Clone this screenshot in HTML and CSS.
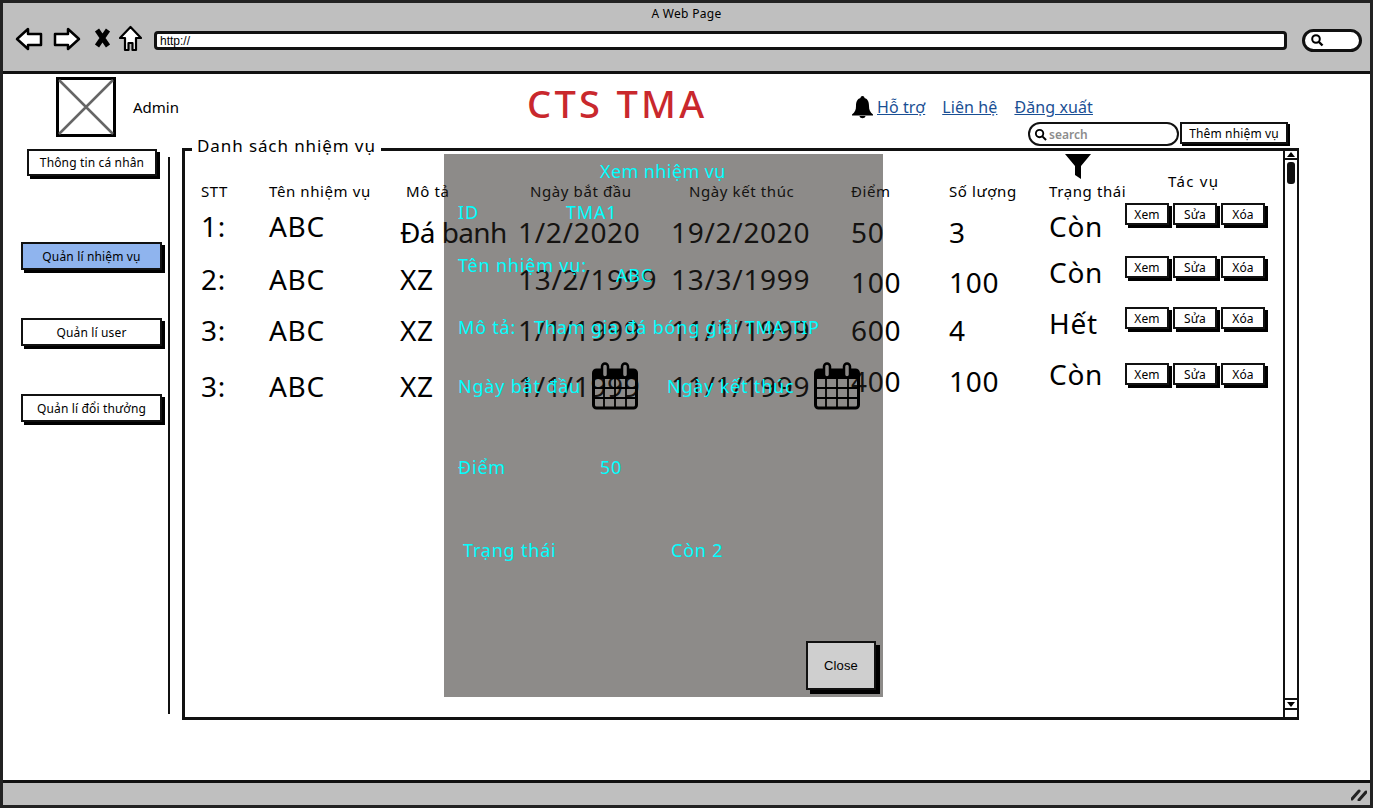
FILE: index.html
```html
<!DOCTYPE html>
<html>
<head>
    <meta charset="UTF-8">
    <meta name="viewport" content="width=device-width, initial-scale=1">
    <title>A Web Page</title>
    <link rel="stylesheet" href="styles.css">
</head>
<body>
<div class="window">
    <header class="topbar">
        <div class="window-title">A Web Page</div>
        <div class="toolbar">
            <svg class="nav-icon" width="28" height="24" viewBox="0 0 28 24"><path d="M2 12 L13 2 V7 H26 V18 H13 V22 Z" fill="#fff" stroke="#000" stroke-width="2.5" stroke-linejoin="round"/></svg>
            <svg class="nav-icon" width="28" height="24" viewBox="0 0 28 24"><path d="M26 12 L15 2 V7 H2 V18 H15 V22 Z" fill="#fff" stroke="#000" stroke-width="2.5" stroke-linejoin="round"/></svg>
            <svg class="nav-close" width="17" height="20" viewBox="0 0 17 20"><path d="M3 2 L14 18 M14 2 L3 18" stroke="#000" stroke-width="5"/></svg>
            <svg class="nav-home" width="23" height="27" viewBox="0 0 23 27"><path d="M11.5 2 L22 13 H17 V25 H13.5 V18 H9.5 V25 H6 V13 H1 Z" fill="#fff" stroke="#000" stroke-width="2.2" stroke-linejoin="round"/></svg>
            <div class="url-bar">http://</div>
            <div class="browser-search">
                <svg width="14" height="14" viewBox="0 0 14 14"><circle cx="6" cy="6" r="3.8" fill="none" stroke="#000" stroke-width="2"/><path d="M9 9 L12.5 12.5" stroke="#000" stroke-width="2.4"/></svg>
            </div>
        </div>
    </header>

    <div class="content">
        <div class="head">
            <svg class="avatar" width="60" height="60" viewBox="0 0 60 60"><rect x="1.5" y="1.5" width="57" height="57" fill="#fff" stroke="#000" stroke-width="3"/><path d="M3 3 L57 57 M57 3 L3 57" stroke="#666" stroke-width="2.5"/></svg>
            <div class="admin-name">Admin</div>
            <div class="brand">CTS TMA</div>
            <div class="head-right">
                <nav class="links">
                    <svg class="bell" width="23" height="24" viewBox="0 0 23 24"><path d="M11.5 1 C13 1 13.5 2 13.5 3 C17 4 18 7 18 11 C18 15 19 17 22 19.5 V20.5 H1 V19.5 C4 17 5 15 5 11 C5 7 6 4 9.5 3 C9.5 2 10 1 11.5 1 Z" fill="#000"/><path d="M8.5 21 C9 24 14 24 14.5 21 Z" fill="#000"/></svg>
                    <a href="#" class="link link-help">Hỗ trợ</a>
                    <a href="#" class="link link-contact">Liên hệ</a>
                    <a href="#" class="link">Đăng xuất</a>
                </nav>
                <div class="search-row">
                    <div class="search-box">
                        <svg width="13" height="13" viewBox="0 0 14 14"><circle cx="6" cy="6" r="4" fill="none" stroke="#000" stroke-width="2"/><path d="M9 9 L13 13" stroke="#000" stroke-width="2.2"/></svg>
                        <span>search</span>
                    </div>
                    <button class="btn btn-add">Thêm nhiệm vụ</button>
                </div>
            </div>
        </div>

        <div class="body">
            <aside class="sidebar">
                <div class="menu">
                    <button class="btn btn-profile">Thông tin cá nhân</button>
                    <button class="btn btn-menu btn-active">Quản lí nhiệm vụ</button>
                    <button class="btn btn-menu">Quản lí user</button>
                    <button class="btn btn-menu">Quản lí đổi thưởng</button>
                </div>
                <div class="divider"></div>
            </aside>

            <section class="panel">
                <div class="legend">Danh sách nhiệm vụ</div>
                <div class="task-table">
                    <svg class="filter" width="26" height="26" viewBox="0 0 26 26"><path d="M0 0 H26 L16 12 V25 L10 21 V12 Z" fill="#000"/></svg>

                    <div class="th">STT</div>
                    <div class="th">Tên nhiệm vụ</div>
                    <div class="th th-desc">Mô tả</div>
                    <div class="th th-start">Ngày bắt đầu</div>
                    <div class="th th-end">Ngày kết thúc</div>
                    <div class="th">Điểm</div>
                    <div class="th">Số lượng</div>
                    <div class="th">Trạng thái</div>
                    <div class="th th-actions">Tác vụ</div>

                    <div class="td">1:</div>
                    <div class="td">ABC</div>
                    <div class="td td-tight nudge-down">Đá banh</div>
                    <div class="td nudge-down">1/2/2020</div>
                    <div class="td nudge-down">19/2/2020</div>
                    <div class="td nudge-down">50</div>
                    <div class="td nudge-down">3</div>
                    <div class="td">Còn</div>
                    <div class="actions"><button class="btn btn-small">Xem</button><button class="btn btn-small">Sửa</button><button class="btn btn-small">Xóa</button></div>

                    <div class="td">2:</div>
                    <div class="td">ABC</div>
                    <div class="td">XZ</div>
                    <div class="td">13/2/1999</div>
                    <div class="td">13/3/1999</div>
                    <div class="td nudge-small">100</div>
                    <div class="td nudge-small">100</div>
                    <div class="td td-status">Còn</div>
                    <div class="actions"><button class="btn btn-small">Xem</button><button class="btn btn-small">Sửa</button><button class="btn btn-small">Xóa</button></div>

                    <div class="td">3:</div>
                    <div class="td">ABC</div>
                    <div class="td">XZ</div>
                    <div class="td">1/1/1999</div>
                    <div class="td">11/1/1999</div>
                    <div class="td">600</div>
                    <div class="td">4</div>
                    <div class="td td-status">Hết</div>
                    <div class="actions"><button class="btn btn-small">Xem</button><button class="btn btn-small">Sửa</button><button class="btn btn-small">Xóa</button></div>

                    <div class="td">3:</div>
                    <div class="td">ABC</div>
                    <div class="td">XZ</div>
                    <div class="td">1/1/1999</div>
                    <div class="td">11/1/1999</div>
                    <div class="td nudge-up">400</div>
                    <div class="td nudge-up">100</div>
                    <div class="td td-status-high">Còn</div>
                    <div class="actions"><button class="btn btn-small">Xem</button><button class="btn btn-small">Sửa</button><button class="btn btn-small">Xóa</button></div>
                </div>
                <div class="scrollbar">
                    <div class="scroll-arrow"><svg width="8" height="5" viewBox="0 0 8 5"><path d="M4 0 L8 5 H0 Z" fill="#000"/></svg></div>
                    <div class="scroll-thumb"></div>
                    <div class="scroll-arrow scroll-arrow-down"><svg width="8" height="5" viewBox="0 0 8 5"><path d="M0 0 H8 L4 5 Z" fill="#000"/></svg></div>
                </div>
            </section>
        </div>
    </div>

    <footer class="statusbar">
        <svg width="16" height="14" viewBox="0 0 16 14"><path d="M1 12 L8 4 M8 13 L15 5" stroke="#222" stroke-width="3" stroke-linecap="round"/></svg>
    </footer>

    <div class="modal">
        <h2 class="modal-title">Xem nhiệm vụ</h2>
        <div class="modal-row row-id"><span class="col-label">ID</span><span>TMA1</span></div>
        <div class="modal-row row-name"><span class="col-label-wide">Tên nhiệm vụ:</span><span class="name-value">ABC</span></div>
        <div class="modal-row row-desc"><span class="col-label-short">Mô tả:</span><span>Tham gia đá bóng giải TMA TIP</span></div>
        <div class="modal-row row-dates">
            <span class="date-label">Ngày bắt đầu</span>
            <svg class="calendar" width="46" height="48" viewBox="0 0 46 48"><use href="#cal"/></svg>
            <span class="date-label date-label-end">Ngày kết thúc</span>
            <svg class="calendar" width="46" height="48" viewBox="0 0 46 48"><use href="#cal"/></svg>
        </div>
        <div class="modal-row row-score"><span class="col-score">Điểm</span><span>50</span></div>
        <div class="modal-row row-state"><span class="col-state">Trạng thái</span><span>Còn 2</span></div>
        <button class="btn btn-close">Close</button>
    </div>

    <svg class="defs" width="0" height="0">
        <defs>
            <g id="cal">
                <rect x="1.5" y="8" width="43" height="38" rx="3" fill="none" stroke="#000" stroke-width="3"/>
                <rect x="2" y="8" width="42" height="9" fill="#000"/>
                <rect x="10" y="1.5" width="6" height="14" rx="3" fill="#8c8a88" stroke="#000" stroke-width="2.5"/>
                <rect x="30" y="1.5" width="6" height="14" rx="3" fill="#8c8a88" stroke="#000" stroke-width="2.5"/>
                <path d="M2 26 H44 M2 36 H44 M12 17 V46 M23 17 V46 M34 17 V46" stroke="#000" stroke-width="1.8"/>
            </g>
        </defs>
    </svg>
</div>
</body>
</html>
```

FILE: styles.css
```css
* {
    box-sizing: border-box;
}

body {
    margin: 0;
    font-family: "Noto Sans", sans-serif;
    color: #000;
    background: #fff;
    overflow: hidden;
}

.window {
    position: relative;
    display: flex;
    flex-direction: column;
    width: 1373px;
    height: 808px;
    border: 3px solid #222;
    background: #fff;
}

/* browser chrome */
.topbar {
    height: 71px;
    flex-shrink: 0;
    background: #bfbfbf;
    border-bottom: 3px solid #111;
}

.window-title {
    padding-top: 2px;
    text-align: center;
    font-size: 12px;
    line-height: 17px;
    letter-spacing: 0.3px;
}

.toolbar {
    display: flex;
    align-items: center;
    margin-top: 3px;
    padding-left: 12px;
}

.nav-icon {
    margin-right: 9px;
}

.nav-icon:first-child {
    margin-right: 10px;
}

.nav-close {
    margin: 0 8px 2px 4px;
}

.nav-home {
    margin-right: 12px;
}

.url-bar {
    width: 1133px;
    height: 19px;
    margin-top: 3px;
    padding-left: 3px;
    background: #fff;
    border: 3px solid #111;
    border-radius: 4px;
    font-family: "Liberation Sans", sans-serif;
    font-size: 12px;
    line-height: 14px;
}

.browser-search {
    display: flex;
    align-items: center;
    width: 60px;
    height: 23px;
    margin: 3px 0 0 15px;
    padding-left: 5px;
    background: #fff;
    border: 3px solid #111;
    border-radius: 12px;
}

.statusbar {
    display: flex;
    align-items: center;
    justify-content: flex-end;
    height: 25px;
    flex-shrink: 0;
    padding-right: 3px;
    background: #bfbfbf;
    border-top: 3px solid #111;
}

.content {
    flex: 1;
    min-height: 0;
    display: flex;
    flex-direction: column;
}

/* page head */
.head {
    display: grid;
    grid-template-columns: 130px 394px 324px 1fr;
    height: 74px;
    flex-shrink: 0;
}

.avatar {
    margin: 3px 0 0 53px;
}

.admin-name {
    padding-top: 22px;
    font-size: 15px;
    line-height: 22px;
}

.brand {
    padding-top: 6px;
    font-size: 38px;
    font-weight: 500;
    line-height: 46px;
    letter-spacing: 3.3px;
    color: #c9282d;
    white-space: nowrap;
}

.links {
    display: flex;
    align-items: center;
    height: 24px;
    margin-top: 21px;
}

.bell {
    margin-right: 3px;
}

.link {
    font-size: 16px;
    line-height: 20px;
    letter-spacing: 0.1px;
    color: #1a4f94;
    text-decoration: underline;
    white-space: nowrap;
}

.link-help {
    margin-right: 17px;
}

.link-contact {
    margin-right: 17px;
}

.search-row {
    display: flex;
    margin: 3px 0 0 177px;
}

.search-box {
    display: flex;
    align-items: center;
    gap: 2px;
    width: 151px;
    height: 24px;
    padding-left: 4px;
    border: 2.5px solid #111;
    border-radius: 12px;
    font-size: 12px;
    font-weight: 600;
    color: #8c8c8c;
}

.btn {
    padding: 0;
    background: #fff;
    border: 2px solid #111;
    box-shadow: 3px 3px 0 #000;
    font-family: inherit;
    font-size: 12px;
    letter-spacing: 0.15px;
    color: #000;
    white-space: nowrap;
}

.btn-add {
    width: 108px;
    height: 22px;
    margin-left: 1px;
    box-shadow: 2px 2px 0 #000;
}

/* body */
.body {
    flex: 1;
    min-height: 0;
    display: flex;
    align-items: flex-start;
}

.sidebar {
    display: flex;
    width: 179px;
    height: 566px;
    flex-shrink: 0;
}

.menu {
    display: flex;
    flex-direction: column;
    align-items: flex-start;
    width: 165px;
    padding: 1px 0 0 18px;
}

.btn-profile {
    width: 130px;
    height: 27px;
    margin-left: 6px;
}

.btn-menu {
    width: 141px;
    height: 28px;
    margin-top: 48px;
}

.btn-profile + .btn-menu {
    margin-top: 66px;
}

.btn-active {
    background: #8fb4ee;
}

.divider {
    width: 2px;
    height: 557px;
    margin-top: 9px;
    background: #111;
}

.panel {
    position: relative;
    display: flex;
    width: 1117px;
    height: 572px;
    border: 3px solid #111;
    border-right-width: 2px;
}

.legend {
    position: absolute;
    top: -17px;
    left: 7px;
    padding: 0 5px;
    background: #fff;
    font-size: 17px;
    line-height: 24px;
    letter-spacing: 0.9px;
    white-space: nowrap;
}

/* table */
.task-table {
    flex: 1;
    display: grid;
    grid-template-columns: 68px 131px 118px 153px 180px 98px 100px 76px 1fr;
    grid-template-rows: 29px 23px 46px 60px 42px 70px;
    align-content: start;
    padding: 0 0 0 16px;
}

.filter {
    grid-column: 1 / -1;
    margin: 3px 0 0 864px;
}

.th {
    align-self: center;
    margin-bottom: 2px;
    font-size: 15px;
    line-height: 20px;
    letter-spacing: 0.6px;
    white-space: nowrap;
}

.th-desc {
    padding-left: 6px;
}

.th-start {
    padding-left: 12px;
}

.th-end {
    padding-left: 18px;
}

.th-actions {
    margin: 0 0 22px 43px;
    letter-spacing: 1.3px;
}

.td {
    align-self: center;
    font-size: 28px;
    line-height: 36px;
    letter-spacing: 0.7px;
    white-space: nowrap;
}

.td-tight {
    letter-spacing: -0.6px;
}

.td-status {
    margin-bottom: 14px;
}

.td-status-high {
    margin-bottom: 24px;
}

.nudge-down {
    margin-top: 12px;
}

.nudge-small {
    margin-top: 6px;
}

.nudge-up {
    margin-bottom: 10px;
}

.actions {
    display: flex;
    gap: 4px;
    align-self: center;
    margin-bottom: 24px;
}

.btn-small {
    width: 44px;
    height: 22px;
    font-size: 12px;
}

/* scrollbar */
.scrollbar {
    display: flex;
    flex-direction: column;
    align-items: center;
    width: 14px;
    flex-shrink: 0;
    margin-top: -1px;
    border-left: 2px solid #111;
}

.scroll-arrow {
    display: flex;
    align-items: center;
    justify-content: center;
    width: 100%;
    height: 10px;
    border-bottom: 2px solid #111;
}

.scroll-thumb {
    width: 8px;
    height: 22px;
    margin-top: 2px;
    background: #111;
    border-radius: 3px;
}

.scroll-arrow-down {
    height: 12px;
    margin-top: auto;
    margin-bottom: 7px;
    border-top: 2px solid #111;
    border-bottom: 2px solid #111;
}

/* modal over the table */
.modal {
    position: absolute;
    top: 151px;
    left: 441px;
    width: 439px;
    height: 543px;
    padding-left: 14px;
    background: rgba(39, 35, 32, 0.53);
    color: #00ffff;
    font-size: 18px;
    line-height: 24px;
    letter-spacing: 0.8px;
}

.modal-title {
    margin: 5px 0 0 142px;
    font-size: 18px;
    font-weight: 400;
    line-height: 24px;
    letter-spacing: 0.4px;
}

.modal-row {
    display: flex;
    align-items: center;
    white-space: nowrap;
}

.row-id {
    margin-top: 17px;
}

.col-label {
    width: 108px;
}

.row-name {
    align-items: flex-start;
    margin-top: 29px;
}

.col-label-wide {
    width: 158px;
}

.name-value {
    margin-top: 10px;
}

.row-desc {
    margin-top: 28px;
}

.col-label-short {
    width: 76px;
}

.row-dates {
    margin-top: 23px;
}

.date-label {
    width: 134px;
}

.date-label-end {
    width: 147px;
    margin-left: 29px;
}

.calendar {
    flex-shrink: 0;
}

.row-score {
    margin-top: 45px;
}

.col-score {
    width: 142px;
}

.row-state {
    margin-top: 59px;
    padding-left: 5px;
}

.col-state {
    width: 208px;
}

.btn-close {
    position: absolute;
    right: 7px;
    bottom: 7px;
    width: 70px;
    height: 49px;
    background: #cfcfcf;
    border-width: 2px;
    box-shadow: 4px 4px 0 #000;
    font-family: "Liberation Sans", sans-serif;
    font-size: 13px;
}

.defs {
    position: absolute;
}
```
